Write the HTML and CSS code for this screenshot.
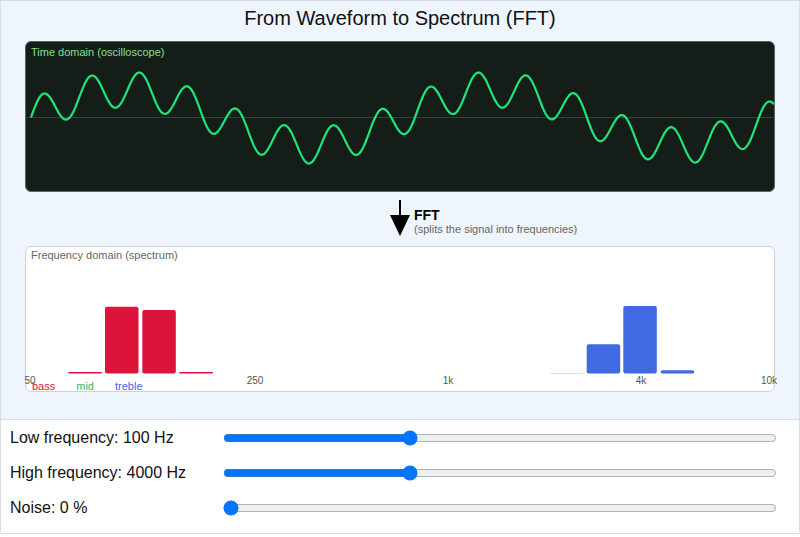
FILE: index.html
```html
<!DOCTYPE html>
<html lang="en">
<head>
<meta charset="utf-8">
<title>From Waveform to Spectrum (FFT)</title>
<link rel="stylesheet" href="styles.css">
</head>
<body>
<div class="app">
  <section class="stage">
    <h1 class="title">From Waveform to Spectrum (FFT)</h1>

    <div class="scope">
      <svg class="scope-svg" viewBox="0 0 748 149" width="748" height="149">
        <line class="scope-axis" x1="0" y1="75.5" x2="748" y2="75.5"/>
        <polyline id="wave" class="wave" points=""/>
      </svg>
      <div class="scope-label">Time domain (oscilloscope)</div>
    </div>

    <div class="fft-row">
      <div></div>
      <svg class="arrow" width="22" height="36" viewBox="0 0 22 36">
        <line x1="11" y1="0" x2="11" y2="17" stroke="#000" stroke-width="2"/>
        <polygon points="1,15 21,15 11,36" fill="#000"/>
      </svg>
      <div class="fft-text">
        <div class="fft-title">FFT</div>
        <div class="fft-sub">(splits the signal into frequencies)</div>
      </div>
    </div>

    <div class="spectrum">
      <svg class="spec-svg" viewBox="0 0 748 144" width="748" height="144">
        <g class="bass-bars">
          <rect x="42.3" y="125" width="33.5" height="1.5"/>
          <rect x="79" y="59.7" width="33.5" height="66.8" rx="2"/>
          <rect x="116.3" y="63" width="33.5" height="63.5" rx="2"/>
          <rect x="153.3" y="125" width="33.5" height="1.5"/>
        </g>
        <g class="treble-bars">
          <rect x="524" y="126" width="33.5" height="0.6" opacity="0.35"/>
          <rect x="560.7" y="97.3" width="33.5" height="29.2" rx="2"/>
          <rect x="597.3" y="59" width="33.5" height="67.5" rx="2"/>
          <rect x="634.7" y="123.3" width="33.5" height="3.2" rx="1.5"/>
        </g>
        <g class="ticks">
          <text x="4" y="137">50</text>
          <text x="229" y="137">250</text>
          <text x="422" y="137">1k</text>
          <text x="615" y="137">4k</text>
          <text x="743" y="137">10k</text>
        </g>
      </svg>
      <div class="spec-label">Frequency domain (spectrum)</div>
      <div class="legend">
        <span class="lg lg-bass">bass</span>
        <span class="lg lg-mid">mid</span>
        <span class="lg lg-treble">treble</span>
      </div>
    </div>
  </section>

  <section class="controls">
    <label class="ctl">
      <span class="ctl-label">Low frequency: 100 Hz</span>
      <input class="ctl-range" type="range" min="0" max="1000" value="332">
    </label>
    <label class="ctl">
      <span class="ctl-label">High frequency: 4000 Hz</span>
      <input class="ctl-range" type="range" min="0" max="1000" value="332">
    </label>
    <label class="ctl">
      <span class="ctl-label">Noise: 0 %</span>
      <input class="ctl-range" type="range" min="0" max="100" value="0">
    </label>
  </section>
</div>
<script src="script.js"></script>
</body>
</html>
```
FILE: styles.css
```css
* { box-sizing: border-box; }

html, body {
  margin: 0;
  padding: 0;
  background: #fff;
  font-family: "Liberation Sans", Arial, sans-serif;
  color: #111;
}

.app {
  width: 800px;
  height: 534px;
  border: 1px solid #d9dee4;
  display: flex;
  flex-direction: column;
}

.stage {
  background: #eef5fd;
  padding: 5px 24px 27px;
  display: flex;
  flex-direction: column;
}

.title {
  margin: 0;
  font-size: 20px;
  font-weight: normal;
  line-height: 24px;
  text-align: center;
  color: #111;
}

.scope {
  position: relative;
  margin-top: 11px;
  height: 151px;
  background: #151d19;
  border: 1px solid #5c6360;
  border-radius: 6px;
}

.scope-svg {
  display: block;
}

.scope-axis {
  stroke: #2f4537;
  stroke-width: 1;
}

.wave {
  fill: none;
  stroke: #1de67b;
  stroke-width: 2.2;
  stroke-linejoin: round;
}

.scope-label {
  position: absolute;
  left: 5px;
  top: 4px;
  font-size: 11px;
  line-height: 13px;
  color: #84e08e;
}

.fft-row {
  height: 54px;
  padding-top: 8px;
  display: grid;
  grid-template-columns: 1fr 22px 1fr;
  align-items: start;
}

.arrow {
  display: block;
}

.fft-text {
  margin-top: 7px;
  margin-left: 3px;
}

.fft-title {
  font-size: 14px;
  font-weight: bold;
  line-height: 16px;
  color: #000;
}

.fft-sub {
  font-size: 11px;
  line-height: 13px;
  color: #666;
}

.spectrum {
  position: relative;
  height: 146px;
  background: #fff;
  border: 1px solid #cfd3d8;
  border-radius: 6px;
}

.spec-svg {
  display: block;
  overflow: visible;
}

.bass-bars rect { fill: #dc143c; }
.treble-bars rect { fill: #4169e1; }

.ticks text {
  font-family: "Liberation Sans", Arial, sans-serif;
  font-size: 10px;
  fill: #555;
  text-anchor: middle;
}

.spec-label {
  position: absolute;
  left: 5px;
  top: 2px;
  font-size: 11px;
  line-height: 13px;
  color: #666;
}

.legend {
  position: absolute;
  left: 6px;
  top: 133px;
  display: flex;
  gap: 21px;
  font-size: 11px;
  line-height: 13px;
}

.lg-bass { color: #dc143c; }
.lg-mid { color: #3cb371; }
.lg-treble { color: #4169e1; }

.controls {
  flex: 1;
  background: #fff;
  border-top: 1px solid #d9dee4;
  padding: 0 22px 8px 9px;
  display: flex;
  flex-direction: column;
}

.ctl {
  height: 35px;
  display: grid;
  grid-template-columns: 213px 1fr;
  align-items: center;
}

.ctl-label {
  font-size: 16px;
  color: #111;
}

.ctl-range {
  width: 100%;
  margin: 0;
}
```
FILE: script.js
```js
(function () {
  var pl = document.getElementById('wave');
  var pts = [];
  for (var x = 5; x <= 748; x += 1) {
    var t = x - 5;
    var y = 75.5 - 28 * Math.sin(2 * Math.PI * t / 371) - 18 * Math.sin(2 * Math.PI * t / 48.33);
    pts.push(x.toFixed(1) + ',' + y.toFixed(2));
  }
  pl.setAttribute('points', pts.join(' '));
})();
```
